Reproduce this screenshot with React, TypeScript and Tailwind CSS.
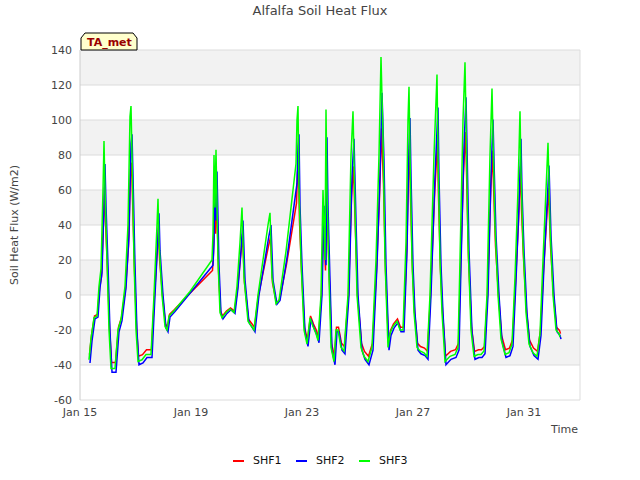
import React from "react";

const X0 = 80, X1 = 580, Y0 = 50, Y1 = 400;
const y = (v: number) => 295 - v * 1.75;

const g: [number, number][] = [
  [89, -37], [91, -25], [94, -13], [97, -12], [99, 5], [101, 15], [103, 60], [104, 88], [105, 60], [107, 20], [109, -20], [111, -42], [115, -42],
  [118, -20], [121, -14], [125, 5], [128, 40], [130, 102], [131, 108], [132, 80], [134, 20], [136, -20], [138, -38], [142, -37], [146, -34], [151, -34],
  [154, 0], [157, 40], [158, 55], [159, 30], [162, 0], [165, -18], [167, -20], [169, -12], [174, -9], [190, 2], [212, 20], [213, 35], [214, 80],
  [215, 50], [216, 83], [218, 20], [220, -10], [222, -13], [226, -10], [230, -8], [234, -10], [237, 5], [240, 30], [242, 50], [244, 10], [248, -15],
  [254, -20], [258, 0], [263, 20], [268, 40], [270, 47], [272, 10], [276, -5], [279, -3], [286, 25], [292, 55], [296, 75], [297, 100], [298, 108],
  [299, 60], [301, 20], [304, -20], [307, -28], [310, -13], [313, -18], [316, -22], [318, -26], [321, 0], [323, 60], [325, 20], [326, 106], [327, 60],
  [329, 10], [331, -30], [334, -38], [336, -20], [338, -20], [341, -30], [344, -32], [348, 0], [351, 80], [353, 105], [355, 50], [357, 0], [361, -30],
  [364, -35], [368, -38], [372, -30], [376, 20], [379, 80], [381, 136], [383, 90], [385, 20], [388, -30], [390, -22], [393, -18], [397, -15], [400, -20],
  [403, -20], [406, 30], [408, 100], [409, 119], [410, 80], [412, 20], [414, -10], [417, -30], [420, -32], [424, -33], [427, -35], [430, 0], [434, 80],
  [437, 126], [438, 80], [440, 20], [442, -10], [445, -38], [450, -35], [455, -34], [458, -30], [460, 20], [463, 100], [465, 133], [466, 100],
  [468, 30], [471, -20], [474, -35], [478, -34], [481, -34], [484, -32], [487, 0], [490, 80], [492, 118], [493, 90], [495, 40], [498, 0], [501, -25],
  [505, -34], [509, -33], [512, -28], [515, 10], [518, 60], [520, 105], [521, 70], [523, 30], [526, -10], [529, -28], [533, -33], [537, -35], [540, -22],
  [543, 20], [546, 60], [548, 87], [550, 40], [553, 0], [556, -20], [559, -22], [560, -24],
];

const mk = (scale: number, dx: number, floor: number) =>
  g.map(([x, v]) => [x + dx, v > 0 ? v * scale : v * floor] as [number, number]);
const blue = mk(0.85, 1, 1.05);
const red = mk(0.7, 0.5, 0.92);
const toPts = (p: [number, number][]) => p.map(([x, v]) => `${x},${y(v).toFixed(1)}`).join(" ");

const yt = [140, 120, 100, 80, 60, 40, 20, 0, -20, -40, -60];
const xt: [number, string][] = [[80, "Jan 15"], [191, "Jan 19"], [302, "Jan 23"], [413, "Jan 27"], [524, "Jan 31"]];
const bands = [120, 80, 40, 0, -40];

export default function App() {
  return (
    <div className="w-[640px] h-[480px] bg-white font-['DejaVu_Sans',sans-serif]">
      <svg width="640" height="480" fontFamily='"DejaVu Sans", sans-serif'>
        <text x="320" y="15" textAnchor="middle" fontSize="13" fill="#444">Alfalfa Soil Heat Flux</text>
        {bands.map((b) => (
          <rect key={b} x={X0} y={y(b + 20)} width={X1 - X0} height={35} fill="#f2f2f2" />
        ))}
        {yt.map((v) => (
          <g key={v}>
            <line x1={X0} x2={X1} y1={y(v)} y2={y(v)} stroke="#dcdcdc" />
            <text x={72} y={y(v) + 4} textAnchor="end" fontSize="11" fill="#444">{v}</text>
          </g>
        ))}
        <line x1={X0} x2={X0} y1={Y0} y2={Y1} stroke="#ccc" />
        <line x1={X1} x2={X1} y1={Y0} y2={Y1} stroke="#ddd" />
        {xt.map(([x, l]) => (
          <text key={l} x={x} y={416} textAnchor="middle" fontSize="11" fill="#444">{l}</text>
        ))}
        <text x={578} y={433} textAnchor="end" fontSize="11" fill="#444">Time</text>
        <text transform="translate(18,225) rotate(-90)" textAnchor="middle" fontSize="11" fill="#444">Soil Heat Flux (W/m2)</text>
        <polyline points={toPts(red)} fill="none" stroke="#ff0000" strokeWidth="1.5" />
        <polyline points={toPts(blue)} fill="none" stroke="#0000ff" strokeWidth="1.5" />
        <polyline points={toPts(g)} fill="none" stroke="#00ff00" strokeWidth="1.5" />
        <path d="M81,50 L81,38 L85,33 L133,33 L137,38 L137,50 Z" fill="#ffffcc" stroke="#000" />
        <text x="87" y="46" fontSize="11" fontWeight="bold" fill="#990000">TA_met</text>
        <line x1="233" x2="244" y1="461" y2="461" stroke="#ff0000" strokeWidth="2" />
        <text x="253" y="464" fontSize="11" fill="#111">SHF1</text>
        <line x1="296" x2="307" y1="461" y2="461" stroke="#0000ff" strokeWidth="2" />
        <text x="316" y="464" fontSize="11" fill="#111">SHF2</text>
        <line x1="359" x2="370" y1="461" y2="461" stroke="#00ff00" strokeWidth="2" />
        <text x="379" y="464" fontSize="11" fill="#111">SHF3</text>
      </svg>
    </div>
  );
}
